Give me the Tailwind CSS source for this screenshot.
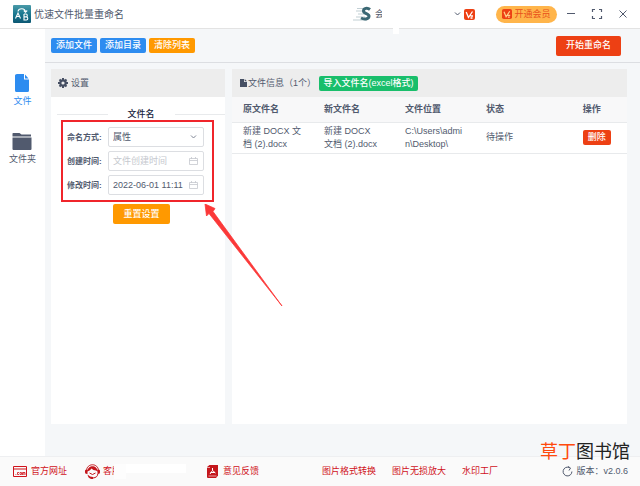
<!DOCTYPE html>
<html lang="zh-CN">
<head>
<meta charset="utf-8">
<meta name="viewport" content="width=device-width, initial-scale=1">
<title>优速文件批量重命名</title>
<script src="https://cdn.jsdelivr.net/npm/@tailwindcss/browser@4"></script>
</head>
<body class="flex min-h-screen flex-col bg-[#f5f7f9] font-['Liberation_Sans','Noto_Sans_CJK_SC',sans-serif] text-[9px] leading-[13px] text-[#515a6e]">

<header class="flex h-[29px] items-center border-b border-[#e3e3e3] bg-white pr-2.5 pl-[13px]">
  <svg class="size-[18px]" viewBox="0 0 18 18" aria-hidden="true">
    <defs><linearGradient id="logo" x1="0" y1="0" x2="0" y2="1"><stop offset="0" stop-color="#4a9aa8"/><stop offset=".5" stop-color="#1a7890"/><stop offset="1" stop-color="#0d5873"/></linearGradient></defs>
    <rect width="18" height="18" rx="1" fill="url(#logo)"/>
    <path d="M5 6.500C5.500 3 12 2.500 12.500 7M10.800 5.500 12.500 7.300 14.200 5.500" fill="none" stroke="#fff" stroke-width="1.100"/>
    <path d="M2.500 13.500 5 8 7.500 13.500M3.500 11.500H6.500M11 9V15H13.300C15.300 15 15.300 12 13.300 11.900H11M11 9H13C14.700 9 14.700 11.900 13 11.900" fill="none" stroke="#fff" stroke-width="1.100"/>
  </svg>
  <h1 class="ml-[3px] text-[10px]">优速文件批量重命名</h1>
  <div class="ml-auto flex items-center">
    <svg class="h-4 w-[19px]" viewBox="0 0 19 16" aria-hidden="true">
      <path d="M4 2.500H13M3 5H10M5 8H11M3 11H12M0 14H14" stroke="#a9bcc2" stroke-width="1.200" opacity=".7"/>
      <path d="M17 3.500C14.500 1.500 10.500 2 10.500 5S16.500 7.500 16 10.500 11 13.500 8 12" fill="none" stroke="#3b6874" stroke-width="3"/>
    </svg>
    <div class="relative ml-[3px] flex w-[86px] items-center justify-between">
      <span>会</span>
      <div class="absolute -top-0.5 left-[7px] h-[17px] w-[70px] bg-white"></div>
      <div class="absolute top-[18px] left-[18px] h-2 w-1.5 bg-white"></div>
      <svg class="h-1.5 w-[7px]" viewBox="0 0 7 6" fill="none" stroke="#515a6e" aria-hidden="true"><path d="M1 1.500 3.500 4 6 1.500"/></svg>
    </div>
    <svg class="ml-[3px] size-[11px]" viewBox="0 0 11 11" aria-hidden="true"><rect width="11" height="11" rx="2" fill="#ed4014"/><path d="M2.200 3 4.500 8.500 8.500 2.500M6.500 7H9M6.500 9H8.500" fill="none" stroke="#fff" stroke-width="1.300"/></svg>
    <button type="button" class="ml-[21px] flex h-[17px] w-[61px] items-center justify-center gap-0.5 rounded-full bg-[#ffb54b] text-[#e8501a]">
      <svg class="size-[10px]" viewBox="0 0 11 11" aria-hidden="true"><rect width="11" height="11" rx="2" fill="#ed4014"/><path d="M2.200 3 4.500 8.500 8.500 2.500M6.500 7H9M6.500 9H8.500" fill="none" stroke="#ffd08a" stroke-width="1.300"/></svg>
      <span>开通会员</span>
    </button>
    <div class="ml-[7px] flex items-center gap-3">
      <button type="button" aria-label="最小化"><svg class="size-[14px]" viewBox="0 0 14 14" fill="none" stroke="#515a6e"><path d="M3 6.500H11"/></svg></button>
      <button type="button" aria-label="最大化"><svg class="size-[14px]" viewBox="0 0 14 14" fill="none" stroke="#515a6e" stroke-width="1.200"><path d="M2.500 5V2.500H5M9 2.500H11.500V5M11.500 9V11.500H9M5 11.500H2.500V9"/></svg></button>
      <button type="button" aria-label="关闭"><svg class="size-[14px]" viewBox="0 0 14 14" fill="none" stroke="#515a6e"><path d="M3.500 3.500 10.500 10.500M10.500 3.500 3.500 10.500"/></svg></button>
    </div>
  </div>
</header>

<div class="flex flex-1">
  <nav class="flex w-[45px] shrink-0 flex-col items-center gap-[25px] bg-white pt-[45px]">
    <a href="#" class="flex flex-col items-center gap-[3px] text-[#2d8cf0]">
      <svg class="h-[18px] w-[14px]" viewBox="0 0 14 18" fill="#2d8cf0" aria-hidden="true"><path d="M2 0H9V5.500H14V16.500Q14 18 12.500 18H1.500Q0 18 0 16.500V1.500Q0 0 2 0ZM10 .5 13.500 4.500H10Z"/></svg>
      <span>文件</span>
    </a>
    <a href="#" class="flex flex-col items-center gap-[3px]">
      <svg class="h-[17px] w-5" viewBox="0 0 20 17" fill="#515a6e" aria-hidden="true"><path d="M1 0H7.500L9.500 1.500H19V3.500H.5V1Q.5 0 1 0ZM.5 4.500H19.500V16Q19.500 17 18.500 17H1.500Q.5 17 .5 16Z"/></svg>
      <span>文件夹</span>
    </a>
  </nav>

  <main class="flex min-w-0 flex-1 flex-col">
    <div class="flex h-[34px] items-center gap-[3px] border-b border-[#dcdee2] pr-[19px] pl-1.5 text-white">
      <button type="button" class="h-[15px] w-[46px] rounded-xs bg-[#2d8cf0] font-medium">添加文件</button>
      <button type="button" class="h-[15px] w-[46px] rounded-xs bg-[#2d8cf0] font-medium">添加目录</button>
      <button type="button" class="h-[15px] w-[46px] rounded-xs bg-[#ff9900] font-medium">清除列表</button>
      <button type="button" class="ml-auto h-5 w-[65px] rounded-xs bg-[#ed4014] font-medium">开始重命名</button>
    </div>

    <div class="flex flex-1 gap-[7px] pt-1.5 pr-[13px] pb-8 pl-1.5">
      <section class="relative w-[174px] shrink-0 bg-white">
        <h2 class="flex h-7 items-center gap-[3px] bg-[#ededed] pl-[7px]">
          <svg class="size-[10px]" viewBox="0 0 10 10" aria-hidden="true"><circle cx="5" cy="5" r="2.700" fill="none" stroke="#464f63" stroke-width="2.200"/><path d="M5 0V2M5 8V10M0 5H2M8 5H10M1.500 1.500 2.800 2.800M7.200 7.200 8.500 8.500M8.500 1.500 7.200 2.800M2.800 7.200 1.500 8.500" stroke="#464f63" stroke-width="2"/></svg>
          设置
        </h2>
        <form>
          <h3 class="flex items-center gap-5 pt-[11px] pl-1.5 font-medium text-[#17233d] before:h-px before:flex-1 before:bg-[#e8eaec] after:h-px after:flex-1 after:bg-[#e8eaec]">文件名</h3>
          <div class="mt-1.5 grid grid-cols-[40px_96px] items-center gap-x-px gap-y-1 pl-4">
            <label for="mode" class="text-[8px] font-bold whitespace-nowrap">命名方式:</label>
            <div class="relative">
              <select id="mode" class="block h-5 w-full appearance-none rounded-xs border border-[#dcdee2] bg-white px-1"><option>属性</option></select>
              <svg class="pointer-events-none absolute top-[7px] right-[7px] h-1.5 w-[7px]" viewBox="0 0 7 6" fill="none" stroke="#808695" aria-hidden="true"><path d="M1 1.500 3.500 4 6 1.500"/></svg>
            </div>
            <label for="created" class="text-[8px] font-bold whitespace-nowrap">创建时间:</label>
            <div class="relative">
              <input id="created" type="text" placeholder="文件创建时间" class="block h-5 w-full rounded-xs border border-[#dcdee2] bg-white pr-4 pl-1 placeholder:text-[#c5c8ce]">
              <svg class="pointer-events-none absolute top-1.5 right-1.5 h-2 w-[9px]" viewBox="0 0 9 8" fill="none" stroke="#c5c8ce" stroke-width=".8" aria-hidden="true"><path d="M.5 1.500H8.500V7.500H.5ZM.5 3.500H8.500M2.500 0V2M6.500 0V2"/></svg>
            </div>
            <label for="modified" class="text-[8px] font-bold whitespace-nowrap">修改时间:</label>
            <div class="relative">
              <input id="modified" type="text" value="2022-06-01 11:11" class="block h-5 w-full rounded-xs border border-[#dcdee2] bg-white pr-4 pl-1">
              <svg class="pointer-events-none absolute top-1.5 right-1.5 h-2 w-[9px]" viewBox="0 0 9 8" fill="none" stroke="#c5c8ce" stroke-width=".8" aria-hidden="true"><path d="M.5 1.500H8.500V7.500H.5ZM.5 3.500H8.500M2.500 0V2M6.500 0V2"/></svg>
            </div>
          </div>
          <button type="button" class="mt-[9px] ml-[62px] block h-5 w-[57px] rounded-xs bg-[#ff9900] font-medium text-white">重置设置</button>
        </form>
        <div class="pointer-events-none absolute top-[51px] left-2.5 h-[82px] w-[153px] border-2 border-[#f0252b]"></div>
        <svg class="pointer-events-none absolute top-[135px] left-[153px] z-10 h-[103px] w-[79px]" viewBox="0 0 79 103" fill="#fb3838" aria-hidden="true"><path d="M1 0 11 4.500 9 7.500 78 102 5 9.500 2.500 12Z" stroke="#fb3838" stroke-width=".8"/></svg>
      </section>

      <section class="min-w-0 flex-1 bg-white">
        <div class="flex h-7 items-center bg-[#ededed] pl-2">
          <svg class="h-2 w-[7px]" viewBox="0 0 7 8" fill="#464f63" aria-hidden="true"><path d="M0 0H4V3H7V8H0ZM4.700 0 7 2.300H4.700Z"/></svg>
          <h2 class="ml-px whitespace-nowrap">文件信息（1个）</h2>
          <button type="button" class="ml-[3px] h-[15px] w-[99px] rounded-xs bg-[#19be6b] font-medium whitespace-nowrap text-white">导入文件名(excel格式)</button>
        </div>
        <table class="w-full table-fixed text-left">
          <colgroup><col class="w-[20.5%]"><col class="w-[20.5%]"><col class="w-[20.5%]"><col class="w-[24.5%]"><col class="w-[14%]"></colgroup>
          <thead class="bg-[#f8f8f9]">
            <tr class="h-[25px] border-b border-[#e8eaec] *:pl-[11px] *:font-bold">
              <th scope="col">原文件名</th><th scope="col">新文件名</th><th scope="col">文件位置</th><th scope="col">状态</th><th scope="col">操作</th>
            </tr>
          </thead>
          <tbody>
            <tr class="h-[31px] border-b border-[#e8eaec] *:pl-[11px] *:whitespace-nowrap">
              <td>新建 DOCX 文<br>档 (2).docx</td>
              <td>新建 DOCX<br>文档 (2).docx</td>
              <td>C:\Users\admi<br>n\Desktop\</td>
              <td>待操作</td>
              <td><button type="button" class="block h-[15px] w-7 rounded-xs bg-[#ed4014] font-medium text-white">删除</button></td>
            </tr>
          </tbody>
        </table>
      </section>
    </div>
  </main>
</div>

<footer class="relative flex h-[30px] items-center border-t border-[#eeeff1] bg-[#fafafa] pr-3 pl-[13px] text-[#d0121b]">
  <a href="#" class="flex items-center gap-1">
    <svg class="h-[11px] w-[14px]" viewBox="0 0 14 11" fill="none" stroke="#d0121b" aria-hidden="true"><path d="M.5 .5H13.500V10.500H.5ZM.5 3H13.500"/><path d="M2.500 8.500H3.300M6 6.500H4.500V8.500H6M7 6.500H8.500V8.500H7ZM9.500 9V6.500H12V9M10.800 6.500V9" stroke-width=".8"/></svg>
    官方网址
  </a>
  <a href="#" class="relative ml-[18px] flex w-[122px] items-center gap-[3px]">
    <svg class="size-[15px]" viewBox="0 0 15 15" aria-hidden="true">
      <path d="M1.500 7C1.500-1.300 13.500-1.300 13.500 7" fill="none" stroke="#c4161c"/>
      <path d="M2.500 7.500C2.500.5 12.500.5 12.500 7.500L11 6.500Q8 6.500 6.500 4.500 5.500 6.500 2.500 7.500ZM0 6.500Q0 5.500 2.500 5.500V10Q0 10 0 8.500ZM15 6.500Q15 5.500 12.500 5.500V10Q15 10 15 8.500Z" fill="#c4161c"/>
      <path d="M4.500 9Q7.500 12 10.500 9M12.800 10Q12.500 13.500 8 14" fill="none" stroke="#c4161c"/>
      <path d="M2.500 10.500Q5 13 8 13V15H6Q3 14 2.500 10.500Z" fill="#c4161c"/>
    </svg>
    <span>客服</span>
    <span class="absolute top-0 left-[29px] h-[9px] w-[72px] bg-white"></span>
    <span class="absolute top-0 left-[29px] h-[15px] w-[12px] bg-[#fdfdfd]"></span>
  </a>
  <a href="#" class="flex items-center gap-[5px]">
    <svg class="h-[13px] w-[11px]" viewBox="0 0 11 13" aria-hidden="true"><path d="M2.500 0H11V10.500L9 13H1Q0 13 0 12V2Z" fill="#c4161c"/><path d="M0 2.500H3M1.500 11H9.500" stroke="#fff" stroke-width=".6"/><path d="M5.500 3V5.500L3 9M5.500 5.500 8.500 8M3.500 7.500H8" fill="none" stroke="#fff"/></svg>
    意见反馈
  </a>
  <div class="ml-[63px] flex gap-4">
    <a href="#">图片格式转换</a><a href="#">图片无损放大</a><a href="#">水印工厂</a>
  </div>
  <div class="ml-auto flex items-center gap-[3px] text-[#515a6e]">
    <svg class="size-[11px]" viewBox="0 0 11 11" fill="none" stroke="#515a6e" aria-hidden="true"><path d="M7 1.400A4.400 4.400 0 1 0 9.900 5.500M6 .5 8.500 2 7 4.500"/></svg>
    <span>版本：v2.0.6</span>
  </div>
  <div class="absolute -top-[17px] right-2.5 font-['Noto_Sans_CJK_SC',sans-serif] text-[18px] leading-5 whitespace-nowrap text-[#222]"><span class="text-[#ff4a0d]">草丁</span>图书馆</div>
</footer>
</body>
</html>
